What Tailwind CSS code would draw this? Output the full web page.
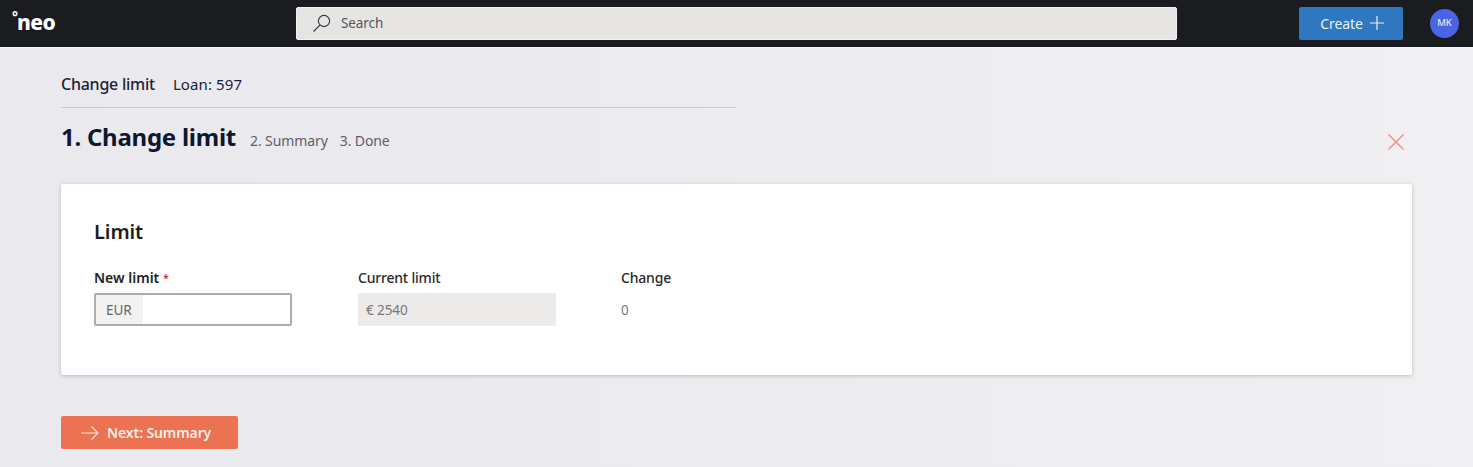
<!DOCTYPE html>
<html lang="en">
<head>
<meta charset="utf-8">
<title>Change limit</title>
<script src="https://cdn.jsdelivr.net/npm/@tailwindcss/browser@4"></script>
</head>
<body class="h-[467px] w-[1473px] overflow-hidden bg-gradient-to-r from-[#e9e9ee] to-[#f0eff1] font-['Noto_Sans',sans-serif]">
<header class="flex h-[48px] items-center border-b border-[#f4f4f6] bg-[#1b1c20] pb-px">
  <div class="flex w-[296px] items-start pb-[2px] pl-[12px] text-white">
    <span class="mt-[-2px] text-[14px] font-bold leading-none">°</span><span class="ml-[-1px] text-[21px] leading-none font-extrabold tracking-[-0.5px]">neo</span>
  </div>
  <div class="flex h-[33px] w-[881px] items-center rounded-[2px] border border-[#f2f1f0] bg-[#e6e5e3] pl-[15px]">
    <svg class="h-[20px] w-[20px]" viewBox="0 0 20 20" fill="none" stroke="#33343a" stroke-width="1.1"><circle cx="12" cy="8" r="5.6"/><path d="M8 12.2 1.5 18.5"/></svg>
    <span class="ml-[9px] text-[13.5px] tracking-[-0.1px] text-[#55555a]">Search</span>
  </div>
  <button class="ml-[122px] flex h-[33px] w-[104px] items-center justify-center gap-[7px] rounded-[2px] bg-[#2f78bf] pl-[2px] text-[14px] text-[#e8f0f8]">
    <span class="pt-[1px] tracking-[-0.1px]">Create</span>
    <svg class="h-[14px] w-[14px]" viewBox="0 0 14 14" fill="none" stroke="#e8f0f8" stroke-width="1.2"><path d="M7 0v14M0 7h14"/></svg>
  </button>
  <div class="ml-[27px] flex h-[29px] w-[29px] items-center justify-center rounded-full bg-[#4b64e3] text-[9.5px] font-medium text-[#e6e9fb]">MK</div>
</header>
<main class="pl-[61px] pr-[61px]">
  <div class="flex h-[60px] w-[675px] items-center gap-[18px] border-b border-[#c9c9ce] pt-[13px] text-[#1a2238]">
    <span class="text-[16px] font-medium tracking-[-0.25px]">Change limit</span>
    <span class="text-[15px] tracking-[0.1px]">Loan: 597</span>
  </div>
  <div class="flex h-[76px] items-start justify-between pr-[8px] pt-[11px]">
    <div class="flex items-center">
      <h1 class="text-[24px] font-bold tracking-[-0.25px] text-[#0f1730]">1. Change limit</h1>
      <span class="ml-[14px] mt-[6px] text-[14px] tracking-[-0.1px] text-[#5d5f68]">2. Summary</span>
      <span class="ml-[12px] mt-[6px] text-[14px] tracking-[-0.1px] text-[#5d5f68]">3. Done</span>
    </div>
    <svg class="mt-[15px] h-[16px] w-[16px]" viewBox="0 0 16 16" fill="none" stroke="#ec8a73" stroke-width="1.3"><path d="M.5.5l15 15M15.500 .5l-15 15"/></svg>
  </div>
  <section class="h-[191px] rounded-[2px] bg-white pl-[33px] pt-[34px] shadow-[0_1px_4px_rgba(0,0,0,0.2)]">
    <h2 class="text-[20px] leading-[28px] font-semibold tracking-[-0.1px] text-[#1c1c20]">Limit</h2>
    <div class="mt-[22px] flex">
      <div class="w-[264px]">
        <div class="flex h-[20px] text-[14px] leading-[20px] font-semibold tracking-[0px] text-[#222226]">New limit<span class="ml-[4px] text-[10px] text-[#d9202a]">*</span></div>
        <div class="mt-[5px] flex h-[33px] w-[198px] overflow-hidden rounded-[2px] border-2 border-[#adadad] bg-white">
          <span class="flex w-[47px] items-center bg-[#f3f2f1] pl-[10px] pt-[1px] text-[13.5px] tracking-[-0.1px] text-[#66666a]">EUR</span>
        </div>
      </div>
      <div class="w-[263px]">
        <div class="h-[20px] text-[14px] leading-[20px] font-medium tracking-[-0.2px] text-[#2a2a2e]">Current limit</div>
        <div class="mt-[5px] flex h-[33px] w-[198px] items-center rounded-[1px] bg-[#edebe9] pl-[8px] pt-[2px] text-[13.5px] tracking-[-0.1px] text-[#77777a]">€ 2540</div>
      </div>
      <div>
        <div class="h-[20px] text-[14px] leading-[20px] font-medium tracking-[-0.2px] text-[#2a2a2e]">Change</div>
        <div class="mt-[5px] flex h-[33px] items-center pt-[2px] text-[13.5px] text-[#77777a]">0</div>
      </div>
    </div>
  </section>
  <button class="mt-[41px] flex h-[33px] w-[177px] items-center rounded-[2px] bg-[#ec7254] pl-[20px] text-[14px] font-semibold tracking-[-0.1px] text-[#fdeee9]">
    <svg class="h-[14px] w-[18px]" viewBox="0 0 18 14" fill="none" stroke="#fde4dc" stroke-width="1.1"><path d="M0 7h17M10.500 .5 17 7l-6.500 6.500"/></svg>
    <span class="ml-[8px]">Next: Summary</span>
  </button>
</main>
</body>
</html>
